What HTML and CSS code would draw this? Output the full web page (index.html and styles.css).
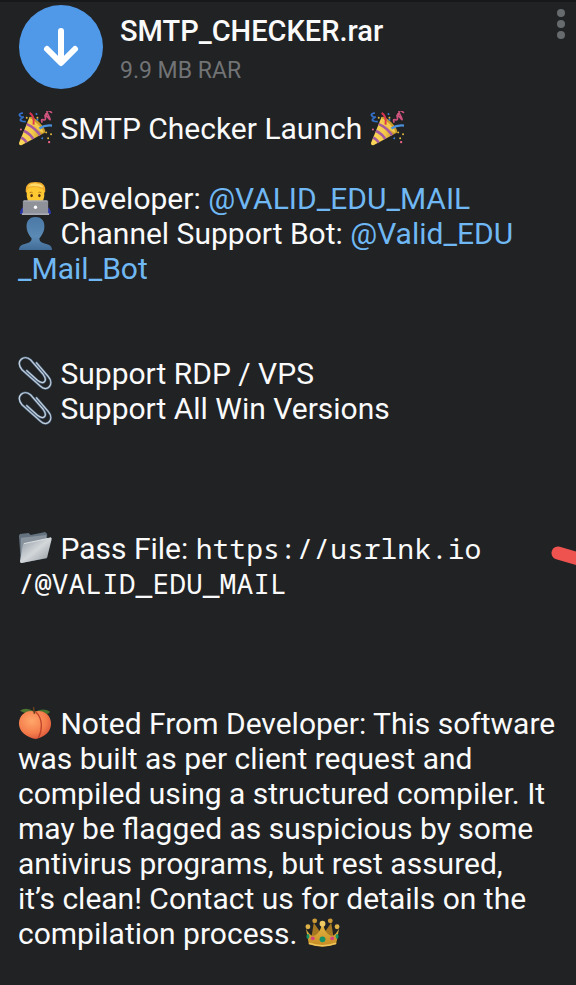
FILE: index.html
```html
<!DOCTYPE html>
<html lang="en">
<head>
    <meta charset="UTF-8">
    <meta name="viewport" content="width=device-width, initial-scale=1.0">
    <title>SMTP_CHECKER.rar</title>
    <link rel="stylesheet" href="styles.css">
</head>
<body>
    <!-- Shared emoji drawings -->
    <svg class="sprites" width="0" height="0" aria-hidden="true">
        <defs>
            <linearGradient id="gold" x1="0" y1="0" x2="1" y2="0">
                <stop offset="0" stop-color="#fbd75a"/>
                <stop offset="0.5" stop-color="#f6cb4c"/>
                <stop offset="1" stop-color="#b98a22"/>
            </linearGradient>
            <linearGradient id="bust" x1="0" y1="0" x2="0" y2="1">
                <stop offset="0" stop-color="#4b78a5"/>
                <stop offset="0.6" stop-color="#5b8ab5"/>
                <stop offset="1" stop-color="#416b97"/>
            </linearGradient>
            <linearGradient id="steel" x1="0" y1="0" x2="1" y2="1">
                <stop offset="0" stop-color="#8b96a0"/>
                <stop offset="0.5" stop-color="#d3d7da"/>
                <stop offset="1" stop-color="#8d949a"/>
            </linearGradient>
            <radialGradient id="fruit" cx="0.4" cy="0.35" r="0.7">
                <stop offset="0" stop-color="#ffa76c"/>
                <stop offset="0.65" stop-color="#f47c4b"/>
                <stop offset="1" stop-color="#d9533a"/>
            </radialGradient>
            <linearGradient id="crown-gold" x1="0" y1="0" x2="0" y2="1">
                <stop offset="0" stop-color="#e3b440"/>
                <stop offset="1" stop-color="#c58a22"/>
            </linearGradient>
            <clipPath id="cone">
                <path d="M12 6L28 22L4 35Q1 36 1 33Z"/>
            </clipPath>
        </defs>

        <symbol id="party" viewBox="0 0 36 36">
            <path d="M12 6L28 22L4 35Q1 36 1 33Z" fill="url(#gold)"/>
            <g clip-path="url(#cone)" stroke="#a55aa0" stroke-width="2.6" fill="none">
                <path d="M8 13Q18 17 24 27"/>
                <path d="M5 20Q13 23 17 31"/>
                <path d="M2 27Q8 29 10 35"/>
            </g>
            <ellipse cx="20" cy="14" rx="11" ry="3" transform="rotate(45 20 14)" fill="#c99a2c"/>
            <ellipse cx="19" cy="15" rx="10" ry="2" transform="rotate(45 19 15)" fill="#f3ca4d"/>
            <path d="M12 2Q17 5 16 14" fill="none" stroke="#dc3552" stroke-width="2"/>
            <path d="M22 18Q28 14 35 15" fill="none" stroke="#4a90dc" stroke-width="2.2"/>
            <path d="M5 2Q0 3 2 5T6 6Q1 9 3 10T8 11" fill="none" stroke="#3270c9" stroke-width="1.8"/>
            <path d="M25 12Q23 8 26 9T28 6T31 7T31 4T35 2" fill="none" stroke="#cf527e" stroke-width="1.7"/>
            <g fill="#e9bd3d">
                <circle cx="9" cy="7" r="1"/><circle cx="29" cy="22" r="1"/><circle cx="34" cy="24" r="1"/><circle cx="31" cy="28" r="1"/><circle cx="20" cy="7" r="1"/>
            </g>
            <g fill="#3d7fd5">
                <circle cx="19" cy="3" r="1"/><circle cx="20" cy="9" r="1"/><circle cx="25" cy="28" r="1"/>
            </g>
            <g fill="#ee668a">
                <circle cx="29" cy="3" r="1"/><circle cx="32" cy="32" r="1.2"/><circle cx="3" cy="19" r="1"/>
            </g>
        </symbol>

        <symbol id="coder" viewBox="0 0 36 36">
            <path d="M2 34Q2 27 9 25H27Q34 27 34 34Z" fill="#2a35a8"/>
            <path d="M8 11Q7 1 18 1T28 11L26 13H10Z" fill="#f0ad2c"/>
            <path d="M9 12Q9 8 12 7Q18 5 24 8Q27 9 27 12V16Q26 24 18 24T9 16Z" fill="#fdc832"/>
            <path d="M10 6Q14 1 21 3Q26 4 26 7Q18 4 10 6Z" fill="#ffdb6a"/>
            <path d="M12 12Q14 11 15 12M21 12Q22 11 24 12" fill="none" stroke="#a26a14" stroke-width="0.8"/>
            <ellipse cx="14" cy="15" rx="1.3" ry="1.7" fill="#573114"/>
            <ellipse cx="22" cy="15" rx="1.3" ry="1.7" fill="#573114"/>
            <path d="M6 20H30Q31 20 31 21V33H5V21Q5 20 6 20Z" fill="#909299"/>
            <path d="M6 20H30V21H6Z" fill="#b8bac0"/>
            <circle cx="18" cy="27" r="1.7" fill="#fff"/>
            <path d="M4 33H32V35H4Z" fill="#a9abb0"/>
        </symbol>

        <symbol id="person" viewBox="0 0 36 36">
            <path d="M18 1C11 1 8 6 9 13C10 18 12 20 14 23C14 27 11 28 6 29Q1 30 1 35H35Q35 30 30 29C25 28 22 27 22 23C24 20 26 18 27 13C28 6 25 1 18 1Z" fill="url(#bust)"/>
        </symbol>

        <symbol id="clip" viewBox="0 0 36 36">
            <g fill="none" stroke-linecap="round">
                <path d="M19 7L31 21C38 29 30 38 23 31L4 14C-3 5 6 -2 13 4L26 19C31 26 26 30 20 25L9 15" stroke="#526b88" stroke-width="2.4"/>
                <path d="M19 7L31 21C38 29 30 38 23 31L4 14C-3 5 6 -2 13 4L26 19C31 26 26 30 20 25L9 15" stroke="#c8d3dc" stroke-width="1.2"/>
            </g>
        </symbol>

        <symbol id="folder" viewBox="0 0 36 36">
            <path d="M1 5L2 3L11 2L13 4L28 1L30 3V28L3 33Z" fill="#64717e"/>
            <path d="M3 7L29 4V9L6 14L3 30Z" fill="#87929c"/>
            <path d="M6 13L34 7Q35 7 34.5 9L30 27Q29 28 28 28L4 33Q2 33 2 31L5 15Q5 13 6 13Z" fill="url(#steel)"/>
            <path d="M6 13L34 7" stroke="#dfe2e4" fill="none"/>
        </symbol>

        <symbol id="peach" viewBox="0 0 36 36">
            <path d="M17 6Q8 0 2 5Q8 9 17 7Z" fill="#4d7431"/>
            <path d="M18 6Q26 1 33 6Q31 10 19 8Z" fill="#44702e"/>
            <path d="M17 6C11 3 1 8 1 18C1 27 9 32 18 34C27 32 34 27 34 18C34 8 24 3 17 6Z" fill="url(#fruit)"/>
            <path d="M18 6C26 13 25 25 21 33" fill="none" stroke="#bd432b" stroke-width="1.3"/>
            <path d="M17 8Q16 4 16 1" fill="none" stroke="#65401e" stroke-width="1.6"/>
        </symbol>

        <symbol id="crown" viewBox="0 0 36 36">
            <path d="M6 26L9 7L16 17L18 12L20 17L27 7L30 26Z" fill="#a57720"/>
            <circle cx="10" cy="5" r="2.5" fill="#cc9a36"/>
            <circle cx="26" cy="5" r="2.5" fill="#cc9a36"/>
            <path d="M1 13Q6 22 10 20Q15 18 17 10H19Q21 18 26 20Q30 22 35 13L32 29Q18 34 4 29Z" fill="url(#crown-gold)"/>
            <circle cx="3" cy="11" r="2.5" fill="#e0b349"/>
            <circle cx="33" cy="11" r="2.5" fill="#e0b349"/>
            <circle cx="18" cy="8" r="3" fill="#f0ca62"/>
            <path d="M4 28Q18 33 32 28" fill="none" stroke="#edc65d" stroke-width="1.5"/>
            <circle cx="18" cy="24" r="3" fill="#159367"/>
            <circle cx="8" cy="23" r="2" fill="#d4457a"/>
            <circle cx="28" cy="23" r="2" fill="#d4457a"/>
            <ellipse cx="3" cy="21" rx="1.5" ry="2.5" fill="#159367"/>
            <ellipse cx="33" cy="21" rx="1.5" ry="2.5" fill="#159367"/>
        </symbol>
    </svg>

    <main class="message">
        <header class="file">
            <button class="download" type="button" aria-label="Download">
                <svg viewBox="0 0 84 84" aria-hidden="true">
                    <path d="M42 26V57M28 44L42 58L56 44"/>
                </svg>
            </button>
            <div class="file-info">
                <h1 class="file-name">SMTP_CHECKER.rar</h1>
                <p class="file-size">9.9 MB RAR</p>
            </div>
            <button class="menu" type="button" aria-label="More options">
                <span class="dot"></span>
                <span class="dot"></span>
                <span class="dot"></span>
            </button>
        </header>

        <div class="text">
            <p><svg class="emoji" aria-hidden="true"><use href="#party"/></svg> SMTP Checker Launch <svg class="emoji" aria-hidden="true"><use href="#party"/></svg></p>
            <br>
            <p><svg class="emoji" aria-hidden="true"><use href="#coder"/></svg> Developer: <a href="#">@VALID_EDU_MAIL</a></p>
            <p><svg class="emoji" aria-hidden="true"><use href="#person"/></svg> Channel Support Bot: <a href="#">@Valid_EDU<br>_Mail_Bot</a></p>
            <br>
            <br>
            <p><svg class="emoji" aria-hidden="true"><use href="#clip"/></svg> Support RDP / VPS</p>
            <p><svg class="emoji" aria-hidden="true"><use href="#clip"/></svg> Support All Win Versions</p>
            <br>
            <br>
            <br>
            <p><svg class="emoji" aria-hidden="true"><use href="#folder"/></svg> Pass File: <code>https://usrlnk.io<br>/@VALID_EDU_MAIL</code></p>
            <br>
            <br>
            <br>
            <p><svg class="emoji" aria-hidden="true"><use href="#peach"/></svg> Noted From Developer: This software was built as per client request and compiled using a structured compiler. It may be flagged as suspicious by some antivirus programs, but rest assured,<br>it’s clean! Contact us for details on the compilation process. <svg class="emoji" aria-hidden="true"><use href="#crown"/></svg></p>
        </div>

        <!-- Red marker stroke running off the right edge -->
        <svg class="marker" viewBox="0 0 26 26" aria-hidden="true">
            <path d="M8 10L32 17"/>
        </svg>
    </main>
</body>
</html>
```
FILE: styles.css
```css
* {
    box-sizing: border-box;
}
body {
    margin: 0;
    border-top: 2px solid #17181a;
    background-color: #202224;
    font-family: Roboto, "Liberation Sans", sans-serif;
    color: #fafafa;
}
.sprites {
    position: absolute;
}
.message {
    position: relative;
    padding: 3px 0 24px 18px;
    overflow: hidden;
}
.file {
    display: flex;
    align-items: flex-start;
    gap: 17px;
}
.download {
    width: 84px;
    height: 84px;
    margin-left: 1px;
    padding: 0;
    border: none;
    border-radius: 50%;
    background-color: #5099e9;
    cursor: pointer;
}
.download svg {
    display: block;
    width: 84px;
    height: 84px;
    fill: none;
    stroke: #fff;
    stroke-width: 6px;
    stroke-linecap: round;
    stroke-linejoin: round;
}
.file-info {
    flex: 1;
    padding-top: 8px;
}
.file-name {
    margin: 0;
    font-size: 29px;
    line-height: 36px;
    font-weight: 500;
}
.file-size {
    margin: 4px 0 0;
    font-size: 23px;
    line-height: 36px;
    color: #717375;
}
.menu {
    display: flex;
    flex-direction: column;
    gap: 3px;
    padding: 4px 11px;
    border: none;
    background: none;
    cursor: pointer;
}
.dot {
    width: 8px;
    height: 8px;
    border-radius: 50%;
    background-color: #676b6e;
}
.text {
    padding: 22px 18px 0 0;
    font-size: 30px;
    line-height: 35px;
}
.text p {
    margin: 0;
}
.text a {
    color: #70b8f3;
    text-decoration: none;
}
.text code {
    font-family: "Noto Sans Mono", "DejaVu Sans Mono", monospace;
    font-size: 28px;
    line-height: 30px;
}
.emoji {
    width: 35px;
    height: 35px;
    vertical-align: bottom;
}
.marker {
    position: absolute;
    top: 541px;
    right: 0;
    width: 26px;
    height: 26px;
    fill: none;
    stroke: #ee5350;
    stroke-width: 13px;
    stroke-linecap: round;
}
```
